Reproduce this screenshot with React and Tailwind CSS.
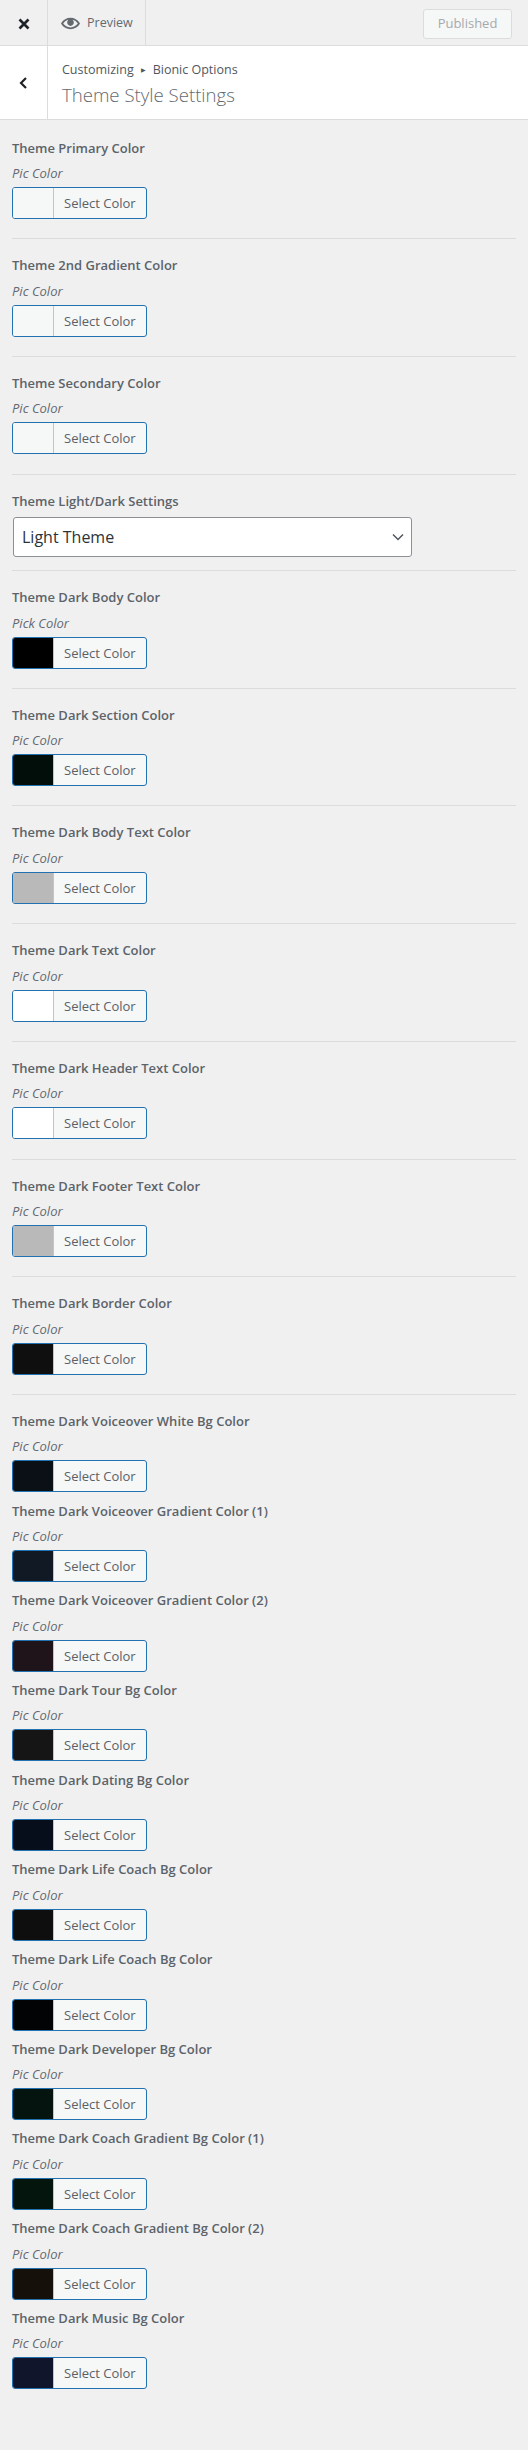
// Color control, optional bottom rule on the first group of settings
const ColorField = ({ title, hint = 'Pic Color', color, ruled, tight }) => (
  <li className={tight ? 'pb-[8.2px]' : ruled ? 'pb-[19.2px] mb-[16px] border-b border-[#dcdcde]' : ''}>
    <div className="text-[13px] leading-[21px] font-semibold text-[#5c6369]">{title}</div>
    <div className="mt-[5.5px] text-[13px] leading-[18px] italic text-[#646970]">{hint}</div>
    <div className="mt-[5px] flex h-[32px] w-[135px] overflow-hidden rounded-[3px] border border-[#2271b1] bg-[#f6f7f7]">
      <div className={`w-[41px] border-r border-[#c3c4c7] ${color}`} />
      <div className="flex-1 pl-[10px] text-[13px] leading-[30px] text-[#5a6167]">Select Color</div>
    </div>
  </li>
);

const ruledFields = [
  { title: 'Theme Primary Color', color: 'bg-[#f6f7f7]' },
  { title: 'Theme 2nd Gradient Color', color: 'bg-[#f6f7f7]' },
  { title: 'Theme Secondary Color', color: 'bg-[#f6f7f7]' },
];

const darkFields = [
  { title: 'Theme Dark Body Color', hint: 'Pick Color', color: 'bg-[#000000]' },
  { title: 'Theme Dark Section Color', color: 'bg-[#020e0a]' },
  { title: 'Theme Dark Body Text Color', color: 'bg-[#b9b9b9]' },
  { title: 'Theme Dark Text Color', color: 'bg-white' },
  { title: 'Theme Dark Header Text Color', color: 'bg-white' },
  { title: 'Theme Dark Footer Text Color', color: 'bg-[#b9b9b9]' },
  { title: 'Theme Dark Border Color', color: 'bg-[#0f0f0f]' },
];

const tightFields = [
  { title: 'Theme Dark Voiceover White Bg Color', color: 'bg-[#0a1016]' },
  { title: 'Theme Dark Voiceover Gradient Color (1)', color: 'bg-[#111a24]' },
  { title: 'Theme Dark Voiceover Gradient Color (2)', color: 'bg-[#1e141a]' },
  { title: 'Theme Dark Tour Bg Color', color: 'bg-[#151515]' },
  { title: 'Theme Dark Dating Bg Color', color: 'bg-[#060e1c]' },
  { title: 'Theme Dark Life Coach Bg Color', color: 'bg-[#0e0e0e]' },
  { title: 'Theme Dark Life Coach Bg Color', color: 'bg-[#020305]' },
  { title: 'Theme Dark Developer Bg Color', color: 'bg-[#06140f]' },
  { title: 'Theme Dark Coach Gradient Bg Color (1)', color: 'bg-[#04150d]' },
  { title: 'Theme Dark Coach Gradient Bg Color (2)', color: 'bg-[#15110a]' },
  { title: 'Theme Dark Music Bg Color', color: 'bg-[#10152c]' },
];

const EyeIcon = () => (
  <svg viewBox="0 0 20 20" className="h-[19px] w-[19px] fill-[#646970]">
    <path d="M19.7 9.4C17.7 6 14 3.9 10 3.9S2.3 6 .3 9.4L0 10l.3.6c2 3.4 5.7 5.5 9.7 5.5s7.7-2.1 9.7-5.5l.3-.6-.3-.6zM10 14.1c-3.1 0-6-1.6-7.7-4.1C3.6 8 5.7 6.6 8 6.1c-.9.6-1.5 1.7-1.5 2.9 0 1.9 1.6 3.5 3.5 3.5s3.5-1.6 3.5-3.5c0-1.2-.6-2.3-1.5-2.9 2.3.5 4.4 1.9 5.7 3.9-1.7 2.5-4.6 4.1-7.7 4.1z" />
  </svg>
);

const CloseIcon = () => (
  <svg viewBox="0 0 12 12" className="h-[12px] w-[12px] stroke-[#1d2327]" strokeWidth="2.6" fill="none">
    <path d="M1.5 1.5l9 9M10.5 1.5l-9 9" />
  </svg>
);

const BackIcon = () => (
  <svg viewBox="0 0 8 12" className="h-[12px] w-[8px] stroke-[#1d2327]" strokeWidth="2.2" fill="none">
    <path d="M7 1L2 6l5 5" />
  </svg>
);

const SelectArrow = () => (
  <svg viewBox="0 0 12 8" className="h-[8px] w-[12px] stroke-[#50575e]" strokeWidth="1.5" fill="none">
    <path d="M1 1.5l5 5 5-5" />
  </svg>
);

export default function App() {
  return (
    <div className="min-h-[2450px] w-[528px] bg-[#f0f0f1] font-['Open_Sans',sans-serif]">
      <header className="flex h-[46px] items-stretch border-b border-[#dcdcde] bg-[#f0f0f1]">
        <div className="flex w-[48px] items-center justify-center border-r border-[#dcdcde] pt-[2px]">
          <CloseIcon />
        </div>
        <div className="flex w-[98px] items-center gap-[7px] border-r border-[#dcdcde] pl-[13px] pt-[1px] text-[12.5px] text-[#646970]">
          <EyeIcon />
          Preview
        </div>
        <div className="flex flex-1 items-center justify-end pr-[16px] pt-[2px]">
          <div className="flex h-[30px] w-[89px] items-center justify-center rounded-[3px] border border-[#dcdcde] bg-[#f6f7f7] text-[13px] text-[#a7aaad]">
            Published
          </div>
        </div>
      </header>

      <div className="flex h-[74px] border-b border-[#dcdcde] bg-white">
        <div className="flex w-[48px] items-center justify-center border-r border-[#dcdcde] pr-[2px]">
          <BackIcon />
        </div>
        <div className="pl-[14px] pt-[14px]">
          <div className="flex items-center text-[12.5px] leading-[20px] text-[#50575e]">
            Customizing
            <span className="mx-[7px] text-[6px] text-[#50575e]">▶</span>
            Bionic Options
          </div>
          <div className="mt-[1px] text-[18.6px] leading-[28px] font-light text-[#646970]">Theme Style Settings</div>
        </div>
      </div>

      <ul className="px-[12px] pt-[17.5px]">
        {ruledFields.map((f) => (
          <ColorField key={f.title} {...f} ruled />
        ))}
        <li className="mb-[16px] border-b border-[#dcdcde] pb-[13px]">
          <div className="text-[13px] leading-[21px] font-semibold text-[#5c6369]">Theme Light/Dark Settings</div>
          <div className="ml-[1px] mt-[5.5px] flex h-[40px] w-[399px] items-center justify-between rounded-[3px] border border-[#8c8f94] bg-white pl-[8px] pr-[7px] text-[16px] text-[#2c3338]">
            Light Theme
            <SelectArrow />
          </div>
        </li>
        {darkFields.map((f) => (
          <ColorField key={f.title} {...f} ruled />
        ))}
        {tightFields.map((f, i) => (
          <ColorField key={i} {...f} tight />
        ))}
      </ul>
    </div>
  );
}
